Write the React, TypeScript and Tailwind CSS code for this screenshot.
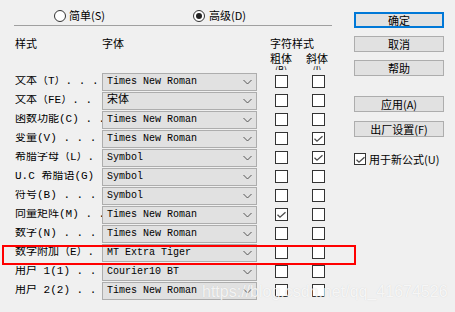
import React from 'react';

type Row = {
  label: string;
  font: string;
  bold?: boolean;
  italic?: boolean;
};

const rows: Row[] = [
  { label: '文本（T）. . .', font: 'Times New Roman' },
  { label: '文本（FE）. .', font: '宋体' },
  { label: '函数功能(C) . . .', font: 'Times New Roman' },
  { label: '变量(V) . . .', font: 'Times New Roman', italic: true },
  { label: '希腊字母（L）.', font: 'Symbol', italic: true },
  { label: 'U.C 希腊语(G)', font: 'Symbol' },
  { label: '符号(B) . . .', font: 'Symbol' },
  { label: '向量矩阵(M) . . .', font: 'Times New Roman', bold: true },
  { label: '数字(N) . . .', font: 'Times New Roman' },
  { label: '数学附加（E）.', font: 'MT Extra Tiger' },
  { label: '用户 1(1) . .', font: 'Courier10 BT' },
  { label: '用户 2(2) . . .', font: 'Times New Roman' },
];

function CheckBox({ checked, size = 13 }: { checked?: boolean; size?: number }) {
  return (
    <div
      className={
        size === 13
          ? 'w-[13px] h-[13px] border border-[#333333] bg-white shrink-0'
          : 'w-[12px] h-[12px] border border-[#333333] bg-white shrink-0'
      }
    >
      {checked && (
        <svg width="11" height="11" viewBox="0 0 11 11" className="block">
          <polyline points="1.5,5.8 4,8.2 9.5,3.2" fill="none" stroke="#4a4a4a" strokeWidth="1.3" />
        </svg>
      )}
    </div>
  );
}

function Radio({ checked }: { checked?: boolean }) {
  return (
    <div className="w-[12px] h-[12px] rounded-full border border-[#333333] bg-white flex items-center justify-center shrink-0">
      {checked && <div className="w-[6px] h-[6px] rounded-full bg-[#222222]" />}
    </div>
  );
}

function Chevron() {
  return (
    <svg width="9" height="6" viewBox="0 0 9 6" className="block">
      <polyline points="0.5,1 4.5,5 8.5,1" fill="none" stroke="#555555" strokeWidth="1" />
    </svg>
  );
}

function Btn({ children, primary }: { children: React.ReactNode; primary?: boolean }) {
  return (
    <div
      className={
        primary
          ? 'h-[16px] w-[90px] border-2 border-[#0078d7] bg-[#e1e1e1] flex items-center justify-center text-[11px] leading-none'
          : 'h-[16px] w-[90px] border border-[#adadad] bg-[#e1e1e1] flex items-center justify-center text-[11px] leading-none'
      }
    >
      {children}
    </div>
  );
}

export default function App() {
  return (
    <div className="relative w-[455px] h-[312px] bg-[#f0f0f0] overflow-hidden text-black font-['Noto_Sans_CJK_SC',sans-serif]">
      <div className="flex">
        {/* left: styles table */}
        <div className="w-[354px] flex flex-col">
          <div className="pt-[6px] pl-[14px]">
            <div className="h-[19px] flex items-center text-[11px] leading-none">
              <div className="ml-[40px]">
                <Radio />
              </div>
              <span className="ml-[3px]">简单(S)</span>
              <div className="ml-[88px]">
                <Radio checked />
              </div>
              <span className="ml-[4px]">高级(D)</span>
            </div>
            <div className="h-px w-[318px] bg-[#a0a0a0]" />
          </div>

          <div className="h-[46px] pl-[15px] pt-[10px] flex items-start text-[11px] leading-[14px]">
            <div className="w-[87px]">样式</div>
            <div className="w-[155px]">字体</div>
            <div className="ml-[13px] flex flex-col">
              <div>字符样式</div>
              <div className="flex mt-[2px]">
                <div className="flex flex-col items-center w-[22px]">
                  <span className="leading-[13px]">粗体</span>
                  <span className="h-[5px] overflow-hidden text-[9px] leading-[9px]">(B)</span>
                </div>
                <div className="flex flex-col items-center w-[22px] ml-[14px]">
                  <span className="leading-[13px]">斜体</span>
                  <span className="h-[5px] overflow-hidden text-[9px] leading-[9px]">(I)</span>
                </div>
              </div>
            </div>
          </div>

          <div className="flex flex-col">
            {rows.map((r) => (
              <div key={r.label} className="h-[19px] pl-[15px] flex items-center">
                <div className="w-[87px] overflow-hidden whitespace-nowrap text-[11px] leading-none font-['Liberation_Mono','Noto_Sans_CJK_SC',monospace]">
                  {r.label}
                </div>
                <div className="w-[155px] h-[18px] border border-[#adadad] bg-[#e1e1e1] flex items-center justify-between pl-[4px] pr-[4px]">
                  <span className="text-[10px] leading-none whitespace-pre font-['Liberation_Mono','Noto_Sans_CJK_SC',monospace]">
                    {r.font === '宋体' ? <span className="text-[11px]">{r.font}</span> : r.font}
                  </span>
                  <Chevron />
                </div>
                <div className="ml-[18px]">
                  <CheckBox checked={r.bold} />
                </div>
                <div className="ml-[24px]">
                  <CheckBox checked={r.italic} />
                </div>
              </div>
            ))}
          </div>
        </div>

        {/* right: buttons */}
        <div className="w-[90px] pt-[12px] flex flex-col">
          <Btn primary>确定</Btn>
          <div className="mt-[8px]">
            <Btn>取消</Btn>
          </div>
          <div className="mt-[8px]">
            <Btn>帮助</Btn>
          </div>
          <div className="mt-[20px]">
            <Btn>应用(A)</Btn>
          </div>
          <div className="mt-[9px]">
            <Btn>出厂设置(F)</Btn>
          </div>
          <div className="mt-[16px] flex items-center">
            <CheckBox checked size={12} />
            <span className="ml-[3px] text-[11px] leading-none">用于新公式(U)</span>
          </div>
        </div>
      </div>

      {/* highlight around 数学附加 row */}
      <div className="absolute left-[2px] top-[245px] w-[354px] h-[20px] border-2 border-[#ff0000] pointer-events-none" />

      {/* watermark */}
      <div className="absolute left-[202px] top-[282px] text-[16px] leading-[20px] text-white/80 font-['Liberation_Sans',Arial,sans-serif] [text-shadow:0_0_1px_rgba(0,0,0,0.15)] pointer-events-none">
        https://blog.csdn.net/qq_41674526
      </div>
    </div>
  );
}
